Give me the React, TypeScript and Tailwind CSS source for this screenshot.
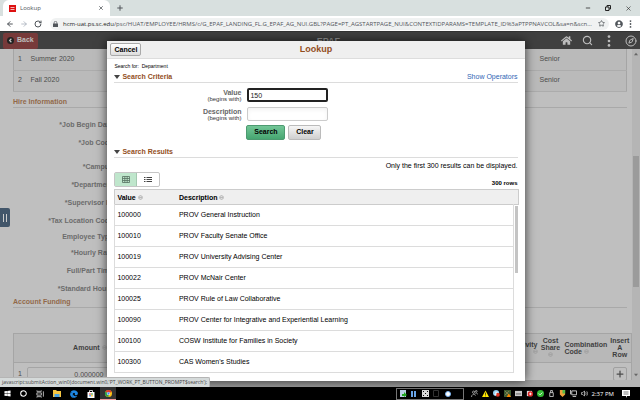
import type { ReactNode } from 'react';
import { ArrowLeft, ArrowRight, Compass, Minus, Plus, RotateCw, Search, Star, X } from 'lucide-react';
import { FaEdge, FaHome, FaUserCircle, FaWindows } from 'react-icons/fa';

const results = [
  ['100000', 'PROV General Instruction'],
  ['100010', 'PROV Faculty Senate Office'],
  ['100019', 'PROV University Advising Center'],
  ['100022', 'PROV McNair Center'],
  ['100025', 'PROV Rule of Law Collaborative'],
  ['100090', 'PROV Center for Integrative and Experiential Learning'],
  ['100100', 'COSW Institute for Families in Society'],
  ['100300', "CAS Women's Studies"],
];

const terms = [
  { row: 1, term: 'Summer 2020', level: 'Senior' },
  { row: 2, term: 'Fall 2020', level: 'Senior' },
];

const hireFields = [
  { label: '*Job Begin Date', space: 'pt-3' },
  { label: '*Job Code', space: 'pt-2' },
  { label: '*Campus', space: 'pt-3.5' },
  { label: '*Department', space: 'pt-2' },
  { label: '*Supervisor ID', space: 'pt-2' },
  { label: '*Tax Location Code', space: 'pt-2' },
  { label: 'Employee Type', space: 'pt-1.5' },
  { label: '*Hourly Rate', space: 'pt-1.5' },
  { label: 'Full/Part Time', space: 'pt-2' },
  { label: '*Standard Hours', space: 'pt-2' },
];

function SortIcon() {
  return (
    <svg viewBox="0 0 6 8" className="inline-block w-[5px] h-[7px] align-[-1px]" fill="none" stroke="#999" strokeWidth="0.7">
      <path d="M3 1 5.5 3.6H.5ZM3 7 .5 4.4h5Z" />
    </svg>
  );
}

function Dots({ className }: { className: string }) {
  return (
    <svg viewBox="0 0 3 9" className={className} fill="currentColor">
      <circle cx="1.5" cy="1.2" r="1" />
      <circle cx="1.5" cy="4.5" r="1" />
      <circle cx="1.5" cy="7.8" r="1" />
    </svg>
  );
}

function BrowserChrome() {
  return (
    <div className="font-['Open_Sans',sans-serif] text-[#50555a]">
      <div className="h-4 bg-[#d8e0df] flex items-stretch pl-[3px]">
        <div className="w-[107px] bg-white rounded-t-md flex items-center px-1.5">
          <svg viewBox="0 0 7 7" className="w-[7px] h-[7px] mr-1">
            <rect width="7" height="7" fill="#d11" />
            <path d="M1.5 2.5h4M1.5 4.5h4" stroke="#fff" strokeWidth="0.7" />
          </svg>
          <span className="flex-1 text-[6px]">Lookup</span>
          <button aria-label="Close tab"><X className="w-1.5 h-1.5" strokeWidth={3} /></button>
        </div>
        <button aria-label="New tab" className="px-1.5"><Plus className="w-2 h-2" strokeWidth={3} /></button>
        <div className="ml-auto flex items-center gap-3.5 pr-2 text-[#222]">
          <button aria-label="Minimize"><Minus className="w-1.5 h-1.5" strokeWidth={3} /></button>
          <button aria-label="Restore">
            <svg viewBox="0 0 6 6" className="w-1.5 h-1.5" fill="none" stroke="currentColor">
              <path d="M.5 2h3.5v3.5H.5ZM2 2V.5h3.5V4H4" />
            </svg>
          </button>
          <button aria-label="Close"><X className="w-[7px] h-[7px]" strokeWidth={2} /></button>
        </div>
      </div>
      <div className="h-[15px] bg-white flex items-center pl-1.5 pr-2">
        <div className="flex items-center gap-1.5 mr-2">
          <ArrowLeft className="w-2 h-2" strokeWidth={3} />
          <ArrowRight className="w-2 h-2 text-gray-400" strokeWidth={2} />
          <RotateCw className="w-2 h-2" strokeWidth={3} />
        </div>
        <div className="flex-1 min-w-0 h-3 rounded-full bg-[#f0f2f2] flex items-center pl-[3px] pr-1">
          <svg viewBox="0 0 5 6" className="w-[5px] h-1.5 mr-[5px] shrink-0">
            <path d="M0 2.5h5V6H0Z" fill="currentColor" />
            <path d="M1.2 2.8V1.6a1.3 1.3 0 0 1 2.6 0v1.2" fill="none" stroke="currentColor" strokeWidth="0.7" />
          </svg>
          <span className="flex-1 text-[6px] leading-[10px] whitespace-nowrap">
            <span className="text-[#222]">hcm-uat.ps.sc.edu</span>
            /psc/HUAT/EMPLOYEE/HRMS/c/G_EPAF_LANDING_FL.G_EPAF_AG_NUI.GBL?PAGE=PT_AGSTARTPAGE_NUI&amp;CONTEXTIDPARAMS=TEMPLATE_ID%3aPTPPNAVCOL&amp;sa=n&amp;scn...
          </span>
          <Star className="w-[7px] h-[7px] shrink-0" strokeWidth={2.5} />
        </div>
        <FaUserCircle className="w-2 h-2 mx-1.5" />
        <Dots className="w-[3px] h-2" />
      </div>
    </div>
  );
}

function AppHeader() {
  return (
    <header className="h-[18px] bg-[#404040] border-t border-[#333] flex items-center pl-[3px] pr-[3px] text-[#bdbdbd]">
      <button className="h-4 px-1 flex items-center gap-[3px] bg-[#773a3a] rounded-xs text-[7px] font-bold">
        <svg viewBox="0 0 8 8" className="w-[7px] h-[7px]">
          <circle cx="4" cy="4" r="4" fill="#222" />
          <path d="M5 2 3 4l2 2" fill="none" stroke="#ccc" strokeWidth="1.3" />
        </svg>
        Back
      </button>
      <h1 className="flex-1 text-center text-[9px] leading-3 font-bold pl-[58px] text-[#999]">EPAF</h1>
      <div className="flex items-center gap-2.5">
        <button aria-label="Home"><FaHome className="w-[11px] h-[11px]" /></button>
        <button aria-label="Search"><Search className="w-[11px] h-[11px]" strokeWidth={2.5} /></button>
        <button aria-label="Actions" className="px-1"><Dots className="w-1 h-3" /></button>
        <button aria-label="NavBar"><Compass className="w-3 h-3" /></button>
      </div>
    </header>
  );
}

function SectionTitle({ children }: { children: ReactNode }) {
  return (
    <h2 className="mr-[5px] border-b border-[#a9a9a9] text-[7px] leading-[10px] font-bold text-[#92694a]">{children}</h2>
  );
}

function PageBehind() {
  return (
    <div className="flex-1 min-h-0 flex bg-[#bfbfbf] text-[7px] text-[#4c4c4c]">
      <div className="flex-1 min-w-0 flex flex-col overflow-hidden">
        <div className="flex-1 min-h-0 overflow-hidden pl-[13px]">
          <table className="w-[calc(100%-5px)] border-b border-x border-[#a5a5a5] bg-[#bababa]">
            <tbody>
              {terms.map((t) => (
                <tr key={t.row} className="h-[21px] border-b border-[#acacac]">
                  <td className="w-[17px] pl-1">{t.row}</td>
                  <td>{t.term}</td>
                  <td className="w-[87px]">{t.level}</td>
                </tr>
              ))}
            </tbody>
          </table>
          <div className="pt-[5px]">
            <SectionTitle>Hire Information</SectionTitle>
          </div>
          <ul className="w-[100px] pb-[3px] text-right font-bold text-[#6c6c6c] whitespace-nowrap">
            {hireFields.map((f) => (
              <li key={f.label} className={`leading-[10px] ${f.space}`}>{f.label}</li>
            ))}
          </ul>
          <SectionTitle>Account Funding</SectionTitle>
          <table className="mt-[25px] w-full table-fixed border border-[#a5a5a5]">
            <colgroup>
              <col className="w-[13px]" />
              <col className="w-[82px]" />
              <col />
              <col className="w-[34px]" />
              <col className="w-[24px]" />
              <col className="w-[46px]" />
              <col className="w-[23px]" />
            </colgroup>
            <thead className="bg-[#b8b8b8] text-left leading-[7px] text-[#3f3f3f]">
              <tr className="h-[29px] border-b border-[#a5a5a5]">
                <th />
                <th className="text-right pr-0.5">Amount <SortIcon /></th>
                <th />
                <th className="text-right pr-px">Activity<br /><SortIcon /></th>
                <th className="text-center">Cost Share <SortIcon /></th>
                <th className="pl-0.5">Combination Code <SortIcon /></th>
                <th className="text-center">Insert<br />A<br />Row</th>
              </tr>
            </thead>
            <tbody>
              <tr className="h-6">
                <td className="pl-1">1</td>
                <td>
                  <input aria-label="Amount" defaultValue="0.000000" className="block w-full h-3.5 pr-1 text-right border border-[#a5a5a5] rounded-xs" />
                </td>
                <td colSpan={4} />
                <td>
                  <button aria-label="Insert row" className="ml-1 w-3.5 h-3.5 border border-[#a0a0a0] rounded-xs flex items-center justify-center">
                    <Plus className="w-2.5 h-2.5" strokeWidth={3} />
                  </button>
                </td>
              </tr>
            </tbody>
          </table>
        </div>
        <div className="h-[7px] bg-[#b5b5b5] pl-1 pr-8">
          <div className="h-full bg-[#9b9b9b]" />
        </div>
      </div>
      <div className="w-2 bg-[#b5b5b5] flex flex-col items-center">
        <svg viewBox="0 0 6 4" className="w-1 h-1 mt-[3px]"><path d="M3 0 6 4H0Z" fill="#666" /></svg>
        <div className="mt-[100px] w-1.5 h-[131px] bg-[#9b9b9b]" />
        <svg viewBox="0 0 6 4" className="w-1 h-1 mt-auto mb-2.5"><path d="M3 4 6 0H0Z" fill="#666" /></svg>
      </div>
    </div>
  );
}

function ModalSection({ title, aside }: { title: string; aside?: ReactNode }) {
  return (
    <div className="h-3 flex items-center border-b border-[#dcdcdc]">
      <svg viewBox="0 0 6 4" className="w-1.5 h-1 mr-0.5"><path d="M0 0h6L3 4Z" fill="#444" /></svg>
      <h3 className="flex-1 text-[7px] leading-none font-bold text-[#934e1c]">{title}</h3>
      {aside}
    </div>
  );
}

function CriteriaRow({ id, label, value, focused }: { id: string; label: string; value: string; focused?: boolean }) {
  return (
    <div className="flex items-center gap-1.5">
      <label htmlFor={id} className="w-[127px] text-right text-[7px] leading-[7px] font-bold text-[#666]">
        {label}
        <span className="block text-[6px] leading-[6px] font-normal text-[#333]">(begins with)</span>
      </label>
      <input
        id={id}
        defaultValue={value}
        className={`w-[81px] h-3.5 px-px text-[7px] text-[#222] bg-white rounded-xs outline-none ${focused ? 'border-[#222] border-2' : 'border border-[#ccc] shadow-inner'}`}
      />
    </div>
  );
}

function LookupDialog() {
  return (
    <div role="dialog" aria-label="Lookup" className="w-[66%] h-full flex flex-col bg-white text-black shadow-[0_0_10px_rgba(0,0,0,0.7)]">
      <div className="h-[18px] shrink-0 bg-[#efefef] border-b border-[#ddd] grid grid-cols-3 items-center px-[3px]">
        <button className="justify-self-start h-[13px] px-[3px] border border-[#aaa] rounded-xs bg-linear-to-b from-white to-[#ddd] text-[7px] leading-none font-bold">Cancel</button>
        <h2 className="text-center text-[9px] leading-none font-bold text-[#934e1c]">Lookup</h2>
      </div>
      <div className="flex-1 min-h-0 flex flex-col pl-[7px] pr-1.5 pb-[7px]">
        <p className="mt-[3px] text-[5px] leading-[8px]">Search for:&nbsp; Department</p>
        <div className="mt-px pr-px">
          <ModalSection title="Search Criteria" aside={<a href="#operators" className="text-[7px] leading-none text-[#2f66b5]">Show Operators</a>} />
        </div>
        <div className="mt-[5px] flex flex-col gap-[5px]">
          <CriteriaRow id="value" label="Value" value="150" focused />
          <CriteriaRow id="description" label="Description" value="" />
        </div>
        <div className="mt-1 pl-[132px] flex gap-[3px] text-[7px] font-bold">
          <button className="w-[39px] h-[15px] border border-[#4d9a71] rounded-xs bg-linear-to-b from-[#72c697] to-[#46a671]">Search</button>
          <button className="w-[33px] h-[15px] border border-[#bbb] rounded-xs bg-linear-to-b from-[#f6f6f6] to-[#cfcfcf]">Clear</button>
        </div>
        <div className="mt-1.5 pr-px">
          <ModalSection title="Search Results" />
        </div>
        <p className="mt-[3px] pr-px text-right text-[7px] leading-[10px]">Only the first 300 results can be displayed.</p>
        <div className="mt-px flex items-end justify-between pr-px">
          <div className="flex h-[15px] border border-[#c5c5c5] rounded-xs text-[#444]">
            <button aria-label="Grid view" className="w-[22px] flex items-center justify-center bg-[#bfe6cc] border-r border-[#a5c9b1]">
              <svg viewBox="0 0 8 7" className="w-2 h-[7px]" fill="none" stroke="#557060" strokeWidth="0.8">
                <path d="M.5.5h7v6h-7ZM.5 2.5h7M.5 4.5h7M2.8.5v6M5.2.5v6" />
              </svg>
            </button>
            <button aria-label="List view" className="w-[22px] flex items-center justify-center">
              <svg viewBox="0 0 8 7" className="w-2 h-[7px]" fill="none" stroke="#444" strokeWidth="1">
                <path d="M0 1.5h1.5M0 3.5h1.5M0 5.5h1.5M2.5 1.5H8M2.5 3.5H8M2.5 5.5H8" />
              </svg>
            </button>
          </div>
          <span className="text-[6px] leading-[8px] font-bold">300 rows</span>
        </div>
        <div className="mt-0.5 relative flex-1 min-h-0 overflow-hidden text-[7px]">
          <table className="w-full table-fixed">
            <colgroup>
              <col className="w-[62px]" />
              <col />
              <col className="w-[5px]" />
            </colgroup>
            <thead>
              <tr className="h-[15px] border border-[#ccc] bg-[#efefef] text-left leading-none">
                <th className="pl-0.5">Value <SortIcon /></th>
                <th className="pl-0.5">Description <SortIcon /></th>
                <th />
              </tr>
            </thead>
            <tbody>
              {results.map(([value, description]) => (
                <tr key={value} className="h-[21px]">
                  <td className="pl-0.5 border-b border-l border-[#dcdcdc]">{value}</td>
                  <td className="pl-0.5 border-b border-r border-[#dcdcdc]">{description}</td>
                  <td />
                </tr>
              ))}
            </tbody>
          </table>
          <div className="absolute right-px top-[17px] w-[3px] h-[67px] bg-[#c4c4c4]" />
        </div>
      </div>
    </div>
  );
}

function Taskbar() {
  return (
    <footer className="h-[13px] shrink-0 bg-black flex items-center text-white font-['Open_Sans',sans-serif]">
      <div className="flex items-center h-full gap-[9px] pl-1">
        <FaWindows className="w-[7px] h-[7px]" />
        <svg viewBox="0 0 8 8" className="w-[7px] h-[7px]" fill="none" stroke="#fff" strokeWidth="1.2"><circle cx="4" cy="4" r="3.2" /></svg>
        <svg viewBox="0 0 9 8" className="w-2 h-2" fill="none" stroke="#ddd" strokeWidth="0.9"><path d="M1 1V0M6 1V0M1 1h5M1 2.7h5v2.6H1ZM1 7h5M1 7v1M6 7v1M8.3 1v6" /></svg>
        <svg viewBox="0 0 8 7" className="w-2 h-[7px]"><path d="M0 0h3l1 1h4v6H0Z" fill="#f5c542" /><path d="M1.5 4h5v3h-5Z" fill="#4ba3e3" /></svg>
        <FaEdge className="w-2 h-2 text-[#1e88e5]" />
        <svg viewBox="0 0 8 8" className="w-2 h-2">
          <path d="M2.5 2V.5h3V2" fill="none" stroke="#fff" strokeWidth="0.8" />
          <path d="M.5 2h7v6h-7Z" fill="#fff" />
          <path d="M2.3 3.2h1.5v1.5H2.3Z" fill="#e44" />
          <path d="M4.2 3.2h1.5v1.5H4.2Z" fill="#4a4" />
          <path d="M2.3 5.1h1.5v1.5H2.3Z" fill="#39e" />
          <path d="M4.2 5.1h1.5v1.5H4.2Z" fill="#fb2" />
        </svg>
        <div className="h-full w-4 -ml-1 flex items-center justify-center bg-[#333] border-b border-[#e99]">
          <svg viewBox="0 0 8 8" className="w-[7px] h-[7px]">
            <circle cx="4" cy="4" r="4" fill="#fbc116" />
            <path d="M4 4 .5 2A4 4 0 0 1 7.5 2Z" fill="#e33b2e" />
            <path d="M4 4 .5 2A4 4 0 0 0 4 8Z" fill="#2ba24c" />
            <circle cx="4" cy="4" r="1.8" fill="#fff" />
            <circle cx="4" cy="4" r="1.3" fill="#4285f4" />
          </svg>
        </div>
      </div>
      <div className="ml-auto mr-[7px] h-3 w-[68px] border border-[#777] flex items-center gap-1 px-[3px]">
        <svg viewBox="0 0 7 7" className="w-[7px] h-[7px]"><path d="M0 0h6v7H0Z" fill="#bcd3e8" /><path d="M2 4h2V2l3 3-3 2V6H2Z" fill="#2a2" /></svg>
        <svg viewBox="0 0 5 6" className="w-[5px] h-1.5"><path d="M0 0h2v6H0ZM3 0h2v6H3Z" fill="#6aa5e8" /></svg>
        <svg viewBox="0 0 7 7" className="ml-0.5 w-[7px] h-[7px]"><path d="M0 0h7v7H0Z" fill="#ddd" /><path d="M1 1h1v1H1ZM5 1h1v1H5ZM3 3h1v1H3ZM1 5h1v1H1ZM5 5h1v1H5Z" fill="#111" /></svg>
        <svg viewBox="0 0 6 7" className="w-1.5 h-[7px]"><path d="M.5.5h5v6h-5Z" fill="none" stroke="#333" /></svg>
        <svg viewBox="0 0 6 6" className="ml-0.5 w-1.5 h-1.5"><circle cx="3" cy="3" r="2.5" fill="#fff" stroke="#7ab4f5" /></svg>
      </div>
      <div className="flex items-center gap-1">
        <svg viewBox="0 0 8 8" className="w-[7px] h-[7px]" fill="none" stroke="#ccc" strokeWidth="0.8"><circle cx="3" cy="2.5" r="1.3" /><circle cx="6" cy="1.5" r="1" /><path d="M.5 8C1 4 5 4 5 6.5M5 4c1-1 2.5-.5 2.5 1" /></svg>
        <svg viewBox="0 0 8 8" className="w-[7px] h-[7px]"><path d="M4 .5 8 8H0Z" fill="#ffe600" /><path d="M4 3v2.5M4 6.3v.9" stroke="#222" strokeWidth="0.9" /></svg>
        <svg viewBox="0 0 8 8" className="w-[7px] h-[7px]"><circle cx="3.5" cy="3.5" r="3.5" fill="#8fd0f3" /><circle cx="5.5" cy="5.5" r="2.3" fill="#d32" /><path d="M2 2.5h3L2 5h2" stroke="#fff" fill="none" /></svg>
        <svg viewBox="0 0 8 8" className="w-[7px] h-[7px]"><path d="M0 0h8v8H0Z" fill="#3c5b32" /><path d="m1 1 5 5M6 1 1 6" stroke="#8a8a55" /><path d="m5.5 4 2.5 4H3Z" fill="#f80" /></svg>
        <svg viewBox="0 0 8 8" className="w-[7px] h-[7px]"><path d="M0 1h8v6H0Z" fill="#ccc" /><path d="M1 4.5h6" stroke="#555" /></svg>
        <svg viewBox="0 0 8 8" className="w-[7px] h-[7px]"><path d="M1 1h6v6H1Z" fill="#ddd" /><circle cx="5" cy="4.5" r="3" fill="#d22" /><path d="M5 3v3M3.5 4.5h3" stroke="#fff" /></svg>
        <svg viewBox="0 0 8 8" className="w-[7px] h-[7px]"><circle cx="4" cy="4" r="4" fill="#3b3" /><path d="m2 4 1.5 1.5L6 3" stroke="#fff" fill="none" /></svg>
        <svg viewBox="0 0 8 8" className="w-[7px] h-[7px]" fill="none" stroke="#ccc"><path d="M2 3h4v4.5H2ZM3 3V.5h2V3" /></svg>
        <svg viewBox="0 0 8 8" className="w-[7px] h-[7px]"><path d="M1 0h6v5L4 8 1 5Z" fill="#eea23c" /><path d="M4 0h3v4H4Z" fill="#5b4" /></svg>
        <svg viewBox="0 0 8 8" className="w-[7px] h-[7px]" fill="none" stroke="#ddd"><path d="M2 1h5.5v4.5H2ZM3 7.5h4M.5 0v5" /></svg>
        <svg viewBox="0 0 8 8" className="w-[7px] h-[7px]" fill="none" stroke="#ddd" strokeWidth="0.8"><path d="M.5 3H2l2-2v6L2 5H.5ZM5.3 2.7q1 1.3 0 2.6M6.6 1.5q2 2.5 0 5" /></svg>
        <span className="text-[6px] leading-none">2:37 PM</span>
      </div>
      <svg viewBox="0 0 8 8" className="ml-2 mr-2.5 w-2 h-2"><path d="M0 0h8v6H5L4 8V6H0Z" fill="#fff" /><path d="M1.5 2h5M1.5 4h5" stroke="#444" strokeWidth="0.7" /></svg>
    </footer>
  );
}

export default function App() {
  return (
    <div className="h-screen flex flex-col overflow-hidden font-['Liberation_Sans',Arial,sans-serif]">
      <BrowserChrome />
      <main className="relative flex-1 min-h-0 flex flex-col">
        <AppHeader />
        <PageBehind />
        <button aria-label="Open side panel" className="absolute left-0 top-[177px] w-2.5 h-[19px] bg-[#42566a] rounded-r-xs flex items-center justify-center gap-0.5">
          <span className="w-px h-2 bg-[#ccc]" />
          <span className="w-px h-2 bg-[#ccc]" />
        </button>
        <div className="absolute inset-0 flex justify-center pt-2.5 pb-1.5 pr-2 pointer-events-none">
          <LookupDialog />
        </div>
        <div className="absolute left-0 bottom-0 h-2.5 px-0.5 flex items-center bg-[#d5dada] rounded-tr-xs border-t border-r border-[#b5b5b5] font-['Open_Sans',sans-serif] text-[5px] text-[#444] whitespace-nowrap">
          javascript:submitAction_win0(document.win0,'PT_WORK_PT_BUTTON_PROMPT$search');
        </div>
      </main>
      <Taskbar />
    </div>
  );
}
